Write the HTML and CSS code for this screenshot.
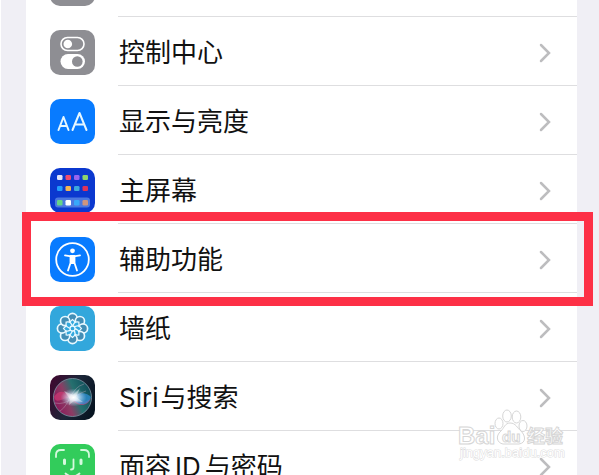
FILE: index.html
```html
<!DOCTYPE html>
<html lang="zh-CN">
<head>
<meta charset="utf-8">
<title>设置</title>
<link rel="stylesheet" href="styles.css">
</head>
<body>
<svg class="defs" aria-hidden="true">
  <symbol id="chevron" viewBox="0 0 12 20"><path d="M2 2l8 8-8 8" fill="none" stroke="#bdbdbf" stroke-width="2.5" stroke-linecap="round"/></symbol>
</svg>
<main class="page">
  <ul class="list">
    <li class="row row-cut">
      <svg class="icon" viewBox="0 0 45 45" aria-hidden="true"><rect width="45" height="45" rx="10" fill="#8e8e93"/></svg>
      <div class="body"></div>
    </li>
    <li class="row">
      <svg class="icon" viewBox="0 0 45 45" aria-hidden="true">
        <rect width="45" height="45" rx="10" fill="#8e8e93"/>
        <rect x="11" y="7.5" width="23" height="13" rx="6.500" fill="none" stroke="#fff" stroke-width="1.600"/>
        <circle cx="17.800" cy="14" r="4.300" fill="#fff"/>
        <rect x="10.500" y="24" width="24.500" height="15" rx="7.500" fill="#fff"/>
        <circle cx="27.300" cy="31.500" r="5.300" fill="#8e8e93"/>
      </svg>
      <a class="body" href="#control"><span>控制中心</span><svg class="chevron" aria-hidden="true"><use href="#chevron"/></svg></a>
    </li>
    <li class="row">
      <svg class="icon" viewBox="0 0 45 45" aria-hidden="true">
        <rect width="45" height="45" rx="10" fill="#087bff"/>
        <g fill="none" stroke="#e6f7ff" stroke-width="2" stroke-linejoin="round" stroke-linecap="round">
          <path d="M8.500 31l5-13 5 13M10.500 27h6"/><path d="M22.500 31l7-17 7 17M25 25.500h9"/>
        </g>
      </svg>
      <a class="body" href="#display"><span>显示与亮度</span><svg class="chevron" aria-hidden="true"><use href="#chevron"/></svg></a>
    </li>
    <li class="row">
      <svg class="icon" viewBox="0 0 45 45" aria-hidden="true">
        <rect width="45" height="45" rx="10" fill="#0b38cf"/>
        <rect x="5" y="29.500" width="35" height="10" rx="3" fill="#4b78e0"/>
        <g>
          <rect x="7" y="7" width="5.500" height="5" rx="1.300" fill="#e3e5fa"/><rect x="15.500" y="7" width="5.500" height="5" rx="1.300" fill="#f34c6d"/><rect x="24" y="7" width="5.500" height="5" rx="1.300" fill="#9a65ef"/><rect x="32.500" y="7" width="5.500" height="5" rx="1.300" fill="#8fd46c"/>
          <rect x="7" y="18" width="5.500" height="5" rx="1.300" fill="#229dff"/><rect x="15.500" y="18" width="5.500" height="5" rx="1.300" fill="#f4b654"/><rect x="24" y="18" width="5.500" height="5" rx="1.300" fill="#3ca9dd"/><rect x="32.500" y="18" width="5.500" height="5" rx="1.300" fill="#e03359"/>
          <rect x="7" y="32" width="5.500" height="5.500" rx="1.300" fill="#65d487"/><rect x="15.500" y="32" width="5.500" height="5.500" rx="1.300" fill="#fff"/><rect x="24" y="32" width="5.500" height="5.500" rx="1.300" fill="#38a8fa"/><rect x="32.500" y="32" width="5.500" height="5.500" rx="1.300" fill="#cf957e"/>
        </g>
      </svg>
      <a class="body" href="#home"><span>主屏幕</span><svg class="chevron" aria-hidden="true"><use href="#chevron"/></svg></a>
    </li>
    <li class="row marked">
      <svg class="icon" viewBox="0 0 45 45" aria-hidden="true">
        <rect width="45" height="45" rx="10" fill="#087bff"/>
        <circle cx="22.500" cy="22.500" r="16.300" fill="none" stroke="#fff" stroke-width="1.800"/>
        <circle cx="22.500" cy="13.800" r="2.400" fill="#fff"/>
        <path d="M15 18.300l6 1h3l6-1" fill="none" stroke="#fff" stroke-width="1.800" stroke-linecap="round" stroke-linejoin="round"/>
        <path d="M20.500 19h4v7l2.500 7.500M20.500 19v7l-2.500 7.500" fill="none" stroke="#fff" stroke-width="1.800" stroke-linecap="round" stroke-linejoin="round"/>
        <path d="M20.500 19h4v8h-4z" fill="#fff"/>
      </svg>
      <a class="body" href="#access"><span>辅助功能</span><svg class="chevron" aria-hidden="true"><use href="#chevron"/></svg></a>
    </li>
    <li class="row">
      <svg class="icon" viewBox="0 0 45 45" aria-hidden="true">
        <rect width="45" height="45" rx="10" fill="#32a7dc"/>
        <g fill="#438eb5" stroke="#e7f8ff" stroke-width="1.700">
          <circle cx="22.500" cy="12" r="4.600"/><circle cx="29.900" cy="15.100" r="4.600"/><circle cx="33" cy="22.500" r="4.600"/><circle cx="29.900" cy="29.900" r="4.600"/><circle cx="22.500" cy="33" r="4.600"/><circle cx="15.100" cy="29.900" r="4.600"/><circle cx="12" cy="22.500" r="4.600"/><circle cx="15.100" cy="15.100" r="4.600"/>
        </g>
        <g fill="#32a7dc" stroke="#e7f8ff" stroke-width="1.300">
          <path id="petal" d="M22.500 22.500c-4-4-3-7 0-9 3 2 4 5 0 9z"/>
          <use href="#petal" transform="rotate(45 22.500 22.500)"/><use href="#petal" transform="rotate(90 22.500 22.500)"/><use href="#petal" transform="rotate(135 22.500 22.500)"/><use href="#petal" transform="rotate(180 22.500 22.500)"/><use href="#petal" transform="rotate(225 22.500 22.500)"/><use href="#petal" transform="rotate(270 22.500 22.500)"/><use href="#petal" transform="rotate(315 22.500 22.500)"/>
          <circle cx="22.500" cy="22.500" r="2.500"/>
        </g>
      </svg>
      <a class="body" href="#wallpaper"><span>墙纸</span><svg class="chevron" aria-hidden="true"><use href="#chevron"/></svg></a>
    </li>
    <li class="row">
      <svg class="icon" viewBox="0 0 45 45" aria-hidden="true">
        <defs>
          <linearGradient id="siri-base" x1="0" y1=".3" x2="1" y2=".7"><stop offset="0" stop-color="#3c0b30"/><stop offset=".5" stop-color="#1b2638"/><stop offset="1" stop-color="#061320"/></linearGradient>
          <linearGradient id="siri-orb" x1="0" y1=".7" x2="1" y2=".3"><stop offset="0" stop-color="#8a1459"/><stop offset=".35" stop-color="#8c3c64"/><stop offset=".6" stop-color="#26706f"/><stop offset="1" stop-color="#0d4a58"/></linearGradient>
          <radialGradient id="siri-glow"><stop offset="0" stop-color="#fff"/><stop offset=".3" stop-color="#edf6ff" stop-opacity=".85"/><stop offset="1" stop-color="#a9c9ef" stop-opacity="0"/></radialGradient>
        </defs>
        <rect width="45" height="45" rx="10" fill="url(#siri-base)"/>
        <circle cx="22.500" cy="22.500" r="19" fill="url(#siri-orb)" stroke="#7f95a5" stroke-width=".8"/>
        <path d="M4 22c5-9 13-5 18 0s14 7 19 1c-3 9-13 9-19 2S7 32 4 22z" fill="#d63a74" opacity=".65"/>
        <path d="M22 23c7-7 15-5 19-1-3 9-12 10-19 1z" fill="#2f8fd6" opacity=".75"/>
        <path d="M10 36C20 30 20 13 34 9M5 28c13 3 20-9 31-12" fill="none" stroke="#bda8bf" stroke-width=".7" opacity=".6"/>
        <ellipse cx="23.500" cy="22.500" rx="13" ry="9" fill="url(#siri-glow)"/>
        <path d="M14 16l9 4 7-7-4 9 7 5-9-1-5 4 1-6z" fill="#fff" opacity=".4"/>
      </svg>
      <a class="body" href="#siri"><span><span class="lead">Siri</span>与搜索</span><svg class="chevron" aria-hidden="true"><use href="#chevron"/></svg></a>
    </li>
    <li class="row">
      <svg class="icon" viewBox="0 0 45 45" aria-hidden="true">
        <rect width="45" height="45" rx="10" fill="#32cc5b"/>
        <g fill="none" stroke="#d5f9de" stroke-width="1.800" stroke-linecap="round">
          <path d="M6 13V11q0-5 5-5h3M31 6h3q5 0 5 5v2M6 32v2q0 5 5 5h3M31 39h3q5 0 5-5v-2"/>
          <path d="M14.500 16v3.500M31 16v3.500" stroke-width="3"/><path d="M23.500 15.500v8q0 2-2.500 2M15.500 29.500q7 6 14 0"/>
        </g>
      </svg>
      <a class="body" href="#faceid"><span>面容<span class="inner">ID</span>与密码</span><svg class="chevron" aria-hidden="true"><use href="#chevron"/></svg></a>
    </li>
  </ul>
  <svg class="watermark" viewBox="0 0 112 56" role="img" aria-label="百度经验">
    <g fill="#fff" stroke="#d6d6d6" stroke-width="1">
      <text class="brand" x="0" y="39" font-size="24">Bai</text>
      <ellipse cx="41" cy="18.500" rx="4" ry="5.500"/><ellipse cx="49" cy="11" rx="4.300" ry="6"/><ellipse cx="58.500" cy="12" rx="4.300" ry="6"/><ellipse cx="65" cy="21" rx="4" ry="5.500"/>
      <path d="M52 18c-5 0-6 5-9 8-6 5-4 12 2 13h16c7-1 7-8 2-13-4-3-5-8-11-8z"/>
      <text class="brand" x="44" y="37" font-size="15">du</text>
      <text class="brand" x="69" y="38" font-size="18">经验</text>
    </g>
    <text class="site" x="2" y="52">jingyan.baidu.com</text>
  </svg>
</main>
</body>
</html>
```
FILE: styles.css
```css
* { box-sizing: border-box; }

html, body { height: 100%; }

body {
  margin: 0;
  overflow: hidden;
  background: #f0eff5;
  color: #111;
  font-family: Inter, "Noto Sans CJK SC", sans-serif;
}

.defs { position: absolute; width: 0; height: 0; }

.page {
  position: relative;
  height: 100%;
  overflow: hidden;
  padding: 0 22px 0 25px;
  border-left: 1px solid #fff;
}

/* The list is scrolled part of a row past the top edge. */
.list {
  margin: -52px 0 0;
  padding: 0;
  list-style: none;
  background: #fff;
}

.row {
  position: relative;
  display: flex;
  height: 69px;
  padding-left: 24px;
}

.icon {
  flex: none;
  width: 45px;
  height: 45px;
  margin-top: 13px;
}

.body {
  flex: 1;
  display: flex;
  align-items: center;
  justify-content: space-between;
  margin-left: 23px;
  padding: 4px 26px 0 1px;
  border-bottom: 1px solid #dedee0;
  color: inherit;
  font-size: 26px;
  line-height: 36px;
  text-decoration: none;
}

.chevron { width: 12px; height: 20px; }

.lead { margin-right: 2px; }

.inner { margin: 0 4px; }

.marked::after {
  content: "";
  position: absolute;
  z-index: 1;
  top: -12px;
  right: -16px;
  bottom: -13px;
  left: -4px;
  border: 9px solid #fd3046;
  pointer-events: none;
}

.watermark {
  position: absolute;
  right: 29px;
  bottom: 14px;
  width: 112px;
  height: 56px;
  pointer-events: none;
}

.brand {
  font-family: "Liberation Sans", "Noto Sans CJK SC", sans-serif;
  font-weight: 700;
}

.site {
  fill: #fff;
  stroke: #dcdcdc;
  stroke-width: 1px;
  paint-order: stroke;
  font-family: "Liberation Sans", sans-serif;
  font-size: 13px;
}
```
